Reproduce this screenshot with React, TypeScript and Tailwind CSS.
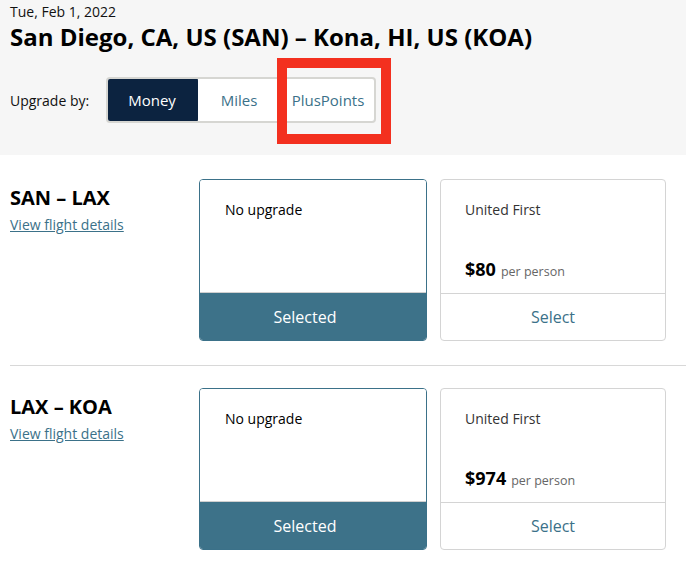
import React from "react"

interface Segment {
    route: string
    price: string
}

const segments: Segment[] = [
    { route: "SAN – LAX", price: "$80" },
    { route: "LAX – KOA", price: "$974" },
]

function SegmentRow({ segment }: { segment: Segment }) {
    return (
        <div className="flex pl-[10px]">
            <div className="w-[189px] pt-[5px]">
                <div className="text-[20px] font-bold leading-[28px] text-black">{segment.route}</div>
                <a href="#" className="text-[14px] leading-[20px] text-[#3b7189] underline">
                    View flight details
                </a>
            </div>

            {/* selected option */}
            <div className="flex h-[162px] w-[228px] flex-col overflow-hidden rounded-[4px] border border-[#3b7189]">
                <div className="flex-1 bg-white px-[25px] pt-[20px] text-[14px] leading-[20px] text-black">
                    No upgrade
                </div>
                <div className="flex h-[48px] items-center justify-center border-t border-[#d0d0d0] bg-[#3d7289] pr-[16px] text-[16px] font-medium text-white">
                    Selected
                </div>
            </div>

            <div className="ml-[13px] flex h-[162px] w-[226px] flex-col rounded-[4px] border border-[#d4d4d4]">
                <div className="flex flex-1 flex-col justify-between px-[24px] pt-[20px] pb-[11px]">
                    <div className="text-[14px] leading-[20px] text-[#333]">United First</div>
                    <div className="flex items-baseline gap-[5px]">
                        <span className="text-[18px] font-bold leading-[24px] text-black">{segment.price}</span>
                        <span className="text-[12.5px] text-[#666]">per person</span>
                    </div>
                </div>
                <div className="flex h-[47px] items-center justify-center border-t border-[#d4d4d4] text-[16px] text-[#3b7189]">
                    Select
                </div>
            </div>
        </div>
    )
}

export default function App() {
    return (
        <div className="min-h-[570px] bg-white font-['Open_Sans',sans-serif]">
            {/* Header */}
            <div className="relative h-[155px] bg-[#f6f6f6] px-[10px] pt-[2px]">
                <div className="text-[14px] leading-[20px] text-[#111]">Tue, Feb 1, 2022</div>
                <h1 className="text-[24px] font-bold leading-[30px] text-black">
                    San Diego, CA, US (SAN) – Kona, HI, US (KOA)
                </h1>

                <div className="mt-[25px] flex items-center">
                    <span className="w-[96px] text-[14px] text-[#111]">Upgrade by:</span>
                    <div className="flex h-[46px] overflow-hidden rounded-[4px] border-2 border-[#d6d6d2] bg-white">
                        <button className="-m-[2px] w-[92px] rounded-[4px] bg-[#0c2340] text-[15px] text-white">
                            Money
                        </button>
                        <button className="w-[86px] text-[15px] text-[#3b7189]">Miles</button>
                        <button className="w-[92px] text-[15px] text-[#3b7189]">PlusPoints</button>
                    </div>
                </div>

                {/* annotation box */}
                <div className="absolute left-[277px] top-[58px] h-[86px] w-[114px] border-[10px] border-[#f3301f]" />
            </div>

            <div className="pt-[24px]">
                <SegmentRow segment={segments[0]} />
                <div className="ml-[10px] mt-[24px] mb-[22px] border-t border-[#d8d8d8]" />
                <SegmentRow segment={segments[1]} />
            </div>
        </div>
    )
}
